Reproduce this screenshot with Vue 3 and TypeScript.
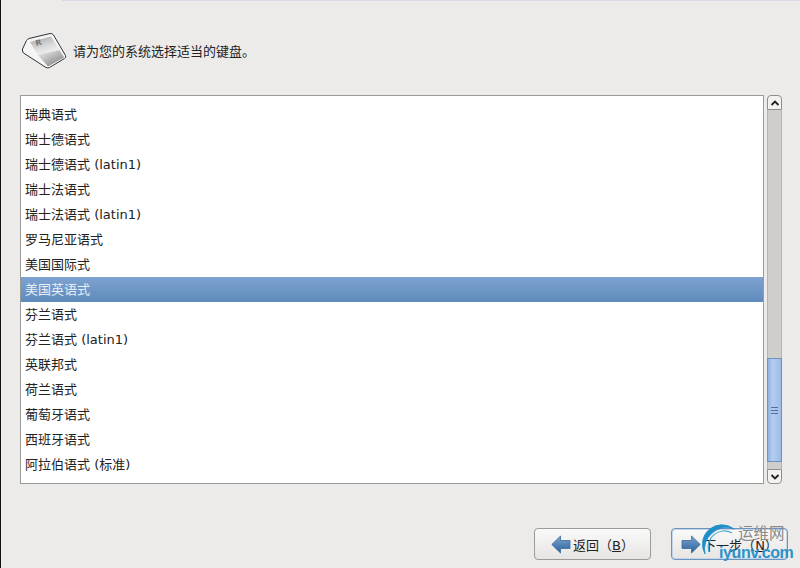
<template>
  <div class="screen">
    <div class="top-line"></div>
    <div class="head">
      <svg class="key-icon" width="46" height="38" viewBox="0 0 46 38">
        <defs>
          <linearGradient id="keyTop" x1="0.2" y1="0" x2="0.7" y2="1">
            <stop offset="0" stop-color="#a9a9a9" />
            <stop offset="0.6" stop-color="#dedede" />
            <stop offset="1" stop-color="#f4f4f4" />
          </linearGradient>
          <linearGradient id="keyFront" x1="0.1" y1="0" x2="0.9" y2="1">
            <stop offset="0" stop-color="#eeeeee" />
            <stop offset="1" stop-color="#7c7c7c" />
          </linearGradient>
        </defs>
        <path d="M1.5 18 L5.5 9.5 Q6.5 8 8 7.5 L29 2.5 Q31 2.2 32.5 4 L44.5 24.5 Q45.5 26.5 43.5 27.5 L28.5 36.5 Q27 37.5 25 36.5 L2.5 22 Q1 20 1.5 18 Z" fill="#f5f5f5" stroke="#333" stroke-width="1" />
        <path d="M9 11 L30 5.5 L38.5 19 L17 24 Z" fill="url(#keyTop)" />
        <path d="M17 24 L38.5 19 L43 26.5 L27 35.5 Z" fill="url(#keyFront)" />
        <text x="15" y="15" class="key-letter" transform="rotate(-12 15 15)">R</text>
      </svg>
      <span class="head-text">请为您的系统选择适当的键盘。</span>
    </div>

    <div class="list-wrap">
      <ul class="list">
        <li v-for="item in layouts" :key="item" :class="{ selected: item === current }">{{ item }}</li>
      </ul>
      <div class="scrollbar">
        <div class="arrow up">
          <svg width="10" height="6" viewBox="0 0 10 6"><path d="M1.5 5 L5 1.5 L8.5 5" fill="none" stroke="#222" stroke-width="1.8" /></svg>
        </div>
        <div class="track">
          <div class="thumb">
            <span></span><span></span><span></span>
          </div>
        </div>
        <div class="arrow down">
          <svg width="10" height="6" viewBox="0 0 10 6"><path d="M1.5 1 L5 4.5 L8.5 1" fill="none" stroke="#222" stroke-width="1.8" /></svg>
        </div>
      </div>
    </div>

    <div class="actions">
      <button class="btn">
        <svg width="20" height="19" viewBox="0 0 20 19">
          <defs>
            <linearGradient id="arrowFill" x1="0" y1="0" x2="0" y2="1">
              <stop offset="0" stop-color="#7ea6d2" />
              <stop offset="1" stop-color="#2a5f98" />
            </linearGradient>
          </defs>
          <path d="M0.8 9.5 L9.5 1 V5.5 H19 V13.5 H9.5 V18 Z" fill="url(#arrowFill)" stroke="#3b6a9c" stroke-linejoin="round" stroke-width="0.8" />
        </svg>
        <span>返回（<u>B</u>）</span>
      </button>
      <button class="btn focus">
        <svg width="20" height="19" viewBox="0 0 20 19">
          <path d="M19.2 9.5 L10.5 1 V5.5 H1 V13.5 H10.5 V18 Z" fill="url(#arrowFill)" stroke="#3b6a9c" stroke-linejoin="round" stroke-width="0.8" />
        </svg>
        <span>下一步（<u>N</u>）</span>
      </button>
    </div>

    <!-- 水印 -->
    <div class="mark">
      <svg class="mark-arc" width="56" height="50" viewBox="0 0 56 50">
        <path d="M38 11 A19.5 19.5 0 0 0 9 36 A22 22 0 0 1 38 11 Z" fill="#1f8fc8" stroke="#1f8fc8" stroke-width="0.8" />
        <path d="M36 15 A16 16 0 0 0 13 34" fill="none" stroke="#4ba6d6" stroke-width="1.2" />
      </svg>
      <span class="mark-cn">运维网</span>
      <span class="mark-en">iyunv.com</span>
    </div>
  </div>
</template>

<script setup lang="ts">
const layouts: string[] = [
  '瑞典语式',
  '瑞士德语式',
  '瑞士德语式 (latin1)',
  '瑞士法语式',
  '瑞士法语式 (latin1)',
  '罗马尼亚语式',
  '美国国际式',
  '美国英语式',
  '芬兰语式',
  '芬兰语式 (latin1)',
  '英联邦式',
  '荷兰语式',
  '葡萄牙语式',
  '西班牙语式',
  '阿拉伯语式 (标准)',
]
const current = '美国英语式'
</script>

<style>
html, body { margin: 0; background: #edebe9; overflow: hidden; }
</style>

<style scoped>
.screen {
  position: relative;
  box-sizing: border-box;
  width: 800px;
  height: 568px;
  border-left: 1px solid #111;
  background: #edebe9;
  font-family: "DejaVu Sans", "Noto Sans CJK SC", sans-serif;
  color: #222;
  overflow: hidden;
}

.top-line { height: 1px; margin-left: 61px; background: #d8d8e6; }

.head {
  display: flex;
  align-items: center;
  gap: 6px;
  height: 38px;
  margin: 30px 0 0 20px;
}
.key-icon { flex: none; }
.key-letter { font-size: 8px; font-weight: 700; fill: #777; font-family: "DejaVu Sans", sans-serif; }
.head-text { font-size: 13px; }

.list-wrap {
  display: flex;
  gap: 3px;
  height: 389px;
  margin: 26px 0 0 19px;
}
.list {
  box-sizing: border-box;
  width: 744px;
  margin: 0;
  padding: 6px 0 0;
  list-style: none;
  background: #fff;
  border: 1px solid #9a9a98;
}
.list li {
  height: 25px;
  padding-left: 4px;
  font-size: 13px;
  line-height: 25px;
  white-space: nowrap;
}
.list li.selected {
  color: #e8eef6;
  background: linear-gradient(#7da2cf, #5f8bbd);
}

.scrollbar {
  display: flex;
  flex-direction: column;
  width: 15px;
}
.arrow {
  display: flex;
  flex: none;
  align-items: center;
  justify-content: center;
  box-sizing: border-box;
  height: 15px;
  background: #f3f2f0;
  border: 1px solid #8e8e8c;
}
.arrow.up { border-radius: 4px 4px 0 0; }
.arrow.down { border-radius: 0 0 4px 4px; }
.track {
  display: flex;
  flex: 1;
  flex-direction: column;
  justify-content: flex-end;
  padding-bottom: 7px;
  background: #cfcecb;
  border-left: 1px solid #b5b4b1;
  border-right: 1px solid #b5b4b1;
}
.thumb {
  display: flex;
  flex-direction: column;
  align-items: center;
  justify-content: center;
  gap: 2px;
  box-sizing: border-box;
  height: 104px;
  margin: 0 -1px;
  background: linear-gradient(90deg, #8fb2e2, #b4cdef 35%, #9cbce8);
  border: 1px solid #6f93c0;
}
.thumb span { width: 7px; height: 1px; background: #4f6f9a; }

.actions {
  display: flex;
  gap: 20px;
  margin: 44px 0 0 533px;
}
.btn {
  display: flex;
  align-items: center;
  justify-content: center;
  gap: 2px;
  box-sizing: border-box;
  width: 117px;
  height: 32px;
  padding: 0;
  background: linear-gradient(#fafafa, #e6e5e3);
  border: 1px solid #9c9b98;
  border-radius: 4px;
  font: inherit;
  font-size: 13px;
  color: #222;
}
.btn.focus { border-color: #6d94c0; box-shadow: inset 0 0 0 1px #c4d5e8; }

.mark {
  position: absolute;
  left: 695px;
  top: 518px;
  width: 104px;
  height: 50px;
}
.mark-arc { position: absolute; left: 0; top: 0; }
.mark-cn {
  position: absolute;
  left: 42px;
  top: 6px;
  font-size: 15.5px;
  line-height: 20px;
  color: #8a8a8a;
}
.mark-en {
  position: absolute;
  left: 23px;
  top: 25px;
  font-family: "Liberation Sans", sans-serif;
  font-size: 16px;
  letter-spacing: -0.4px;
  line-height: 20px;
  font-weight: 700;
  color: #2a93cc;
}
</style>
